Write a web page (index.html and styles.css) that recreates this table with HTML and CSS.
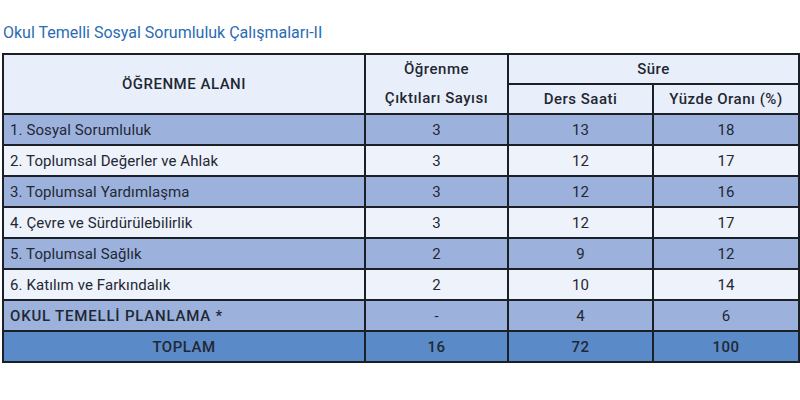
FILE: index.html
```html
<!DOCTYPE html>
<html lang="tr">
<head>
<meta charset="utf-8">
<link rel="stylesheet" href="styles.css">
</head>
<body>
<div class="page">
  <h1 class="title">Okul Temelli Sosyal Sorumluluk Çalışmaları-II</h1>
  <table class="grid">
    <colgroup>
      <col class="c1"><col class="c2"><col class="c3"><col class="c4">
    </colgroup>
    <thead>
      <tr>
        <th rowspan="2">ÖĞRENME ALANI</th>
        <th rowspan="2" class="stack"><span>Öğrenme</span><span>Çıktıları Sayısı</span></th>
        <th colspan="2" class="h1">Süre</th>
      </tr>
      <tr>
        <th class="h2">Ders Saati</th>
        <th class="h2">Yüzde Oranı (%)</th>
      </tr>
    </thead>
    <tbody>
      <tr class="dark"><td class="name">1. Sosyal Sorumluluk</td><td>3</td><td>13</td><td>18</td></tr>
      <tr class="light"><td class="name">2. Toplumsal Değerler ve Ahlak</td><td>3</td><td>12</td><td>17</td></tr>
      <tr class="dark"><td class="name">3. Toplumsal Yardımlaşma</td><td>3</td><td>12</td><td>16</td></tr>
      <tr class="light"><td class="name">4. Çevre ve Sürdürülebilirlik</td><td>3</td><td>12</td><td>17</td></tr>
      <tr class="dark"><td class="name">5. Toplumsal Sağlık</td><td>2</td><td>9</td><td>12</td></tr>
      <tr class="light"><td class="name">6. Katılım ve Farkındalık</td><td>2</td><td>10</td><td>14</td></tr>
      <tr class="dark"><td class="name bold">OKUL TEMELLİ PLANLAMA *</td><td>-</td><td>4</td><td>6</td></tr>
      <tr class="total"><td>TOPLAM</td><td>16</td><td>72</td><td>100</td></tr>
    </tbody>
  </table>
</div>
</body>
</html>
```

FILE: styles.css
```css
html, body {
  margin: 0;
  padding: 0;
  background: #ffffff;
}

.page {
  padding: 23px 2px 0 2px;
  font-family: Roboto, "Liberation Sans", sans-serif;
  color: #1f2833;
}

.title {
  margin: 0 0 11px 1px;
  font-size: 16px;
  font-weight: 400;
  color: #2a6cb3;
  line-height: 19px;
}

.grid {
  width: 796px;
  border-collapse: collapse;
  table-layout: fixed;
  font-size: 15px;
  border: 2px solid #1b2026;
}

.c1 { width: 362px; }
.c2 { width: 143px; }
.c3 { width: 145px; }
.c4 { width: 146px; }

.grid th, .grid td {
  border: 2px solid #1b2026;
  text-align: center;
  padding: 0;
  line-height: 18px;
}

.grid th {
  background: #e9effa;
  font-weight: 500;
  color: #1f2833;
  letter-spacing: 0.5px;
}

.grid th.h1, .grid th.h2 {
  height: 27px;
}

.grid th.stack span {
  display: block;
  line-height: 29px;
}

.grid td {
  height: 29px;
  font-weight: 400;
}

.grid td.name {
  text-align: left;
  padding-left: 6px;
  letter-spacing: 0.1px;
}

.grid td.bold {
  font-weight: 500;
  letter-spacing: 0.8px;
}

.dark td { background: #9cb2dd; }
.light td { background: #edf2fb; }

.total td {
  background: #5a8ac8;
  font-weight: 500;
  letter-spacing: 0.5px;
  height: 29px;
}
```
